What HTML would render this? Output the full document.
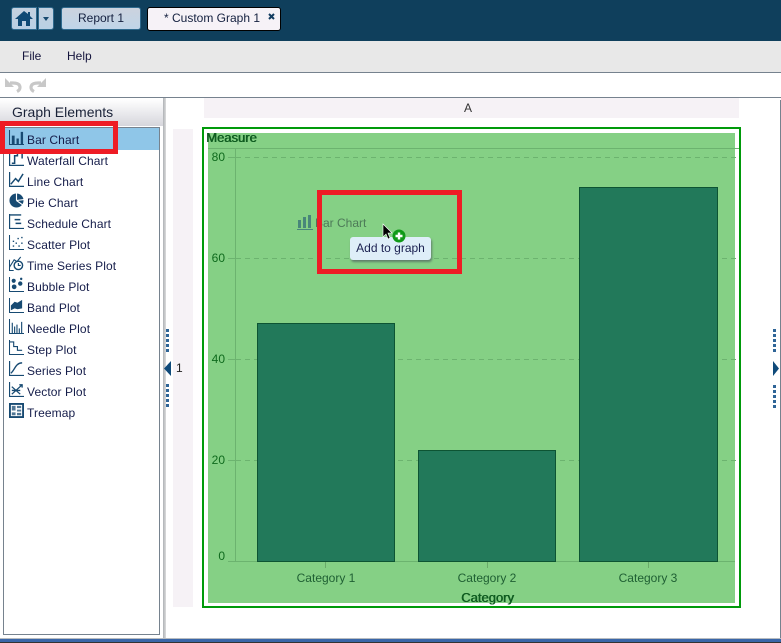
<!DOCTYPE html>
<html><head><meta charset="utf-8"><style>
html,body{margin:0;padding:0;background:#fff}
#p{position:relative;width:781px;height:643px;overflow:hidden;background:#fff;font:12px "Liberation Sans",sans-serif;color:#10204a}
#p div,#p svg,#p span{position:absolute;white-space:nowrap}
.r{left:27px;height:21px;line-height:21px;font-size:12px;color:#151d4a;letter-spacing:.1px}
.i{left:9px;width:15px;height:15px;fill:none;stroke:#174a72;stroke-width:1.2}
.y{color:#0f6a1d;font-size:12px;text-align:right;width:20px;left:205px;height:14px;line-height:14px}
.c{color:#1f5f33;font-size:12px;width:100px;text-align:center;top:571px;line-height:14px}
.g{left:236px;width:500px;height:1px;background:repeating-linear-gradient(90deg,#6cb36f 0 5px,transparent 5px 9px)}
.k{left:228px;width:8px;height:1px;background:#6cb36f}
.b{background:#22795a;border:1px solid #0d5433;box-sizing:border-box}
.t{width:1px;height:6px;background:#69aa69;top:562px}
.d{width:3px;height:3px;background:#2f6597}
</style></head><body><div id="p">
<div style="left:0;top:0;width:781px;height:41px;background:#0f3f5c"></div>
<div style="left:11px;top:7px;width:26px;height:23px;background:linear-gradient(#c4d1df,#b9d0e4);border:1px solid #2f6a8e;border-radius:3px 0 0 3px;box-sizing:border-box"></div>
<svg style="left:14px;top:9px" width="20" height="19" viewBox="0 0 20 19"><path d="M10 2L1 10h3v7h4v-5h4v5h4v-7h3l-3-3V3h-2v2z" fill="#0f4a75"/></svg>
<div style="left:38px;top:7px;width:16px;height:23px;background:linear-gradient(#c4d1df,#b9d0e4);border:1px solid #2f6a8e;border-radius:0 3px 3px 0;box-sizing:border-box"></div>
<svg style="left:43px;top:17px" width="6" height="4"><path d="M0 0h6L3 4z" fill="#184a70"/></svg>
<div style="left:61px;top:7px;width:80px;height:23px;background:linear-gradient(#ccd3de,#bfd4e8);border:1px solid #2f6a8e;border-radius:3px;box-sizing:border-box;text-align:center;line-height:21px;color:#14203f">Report 1</div>
<div style="left:147px;top:7px;width:134px;height:24px;background:#f6f2f7;border:1px solid #000;border-radius:3px;box-sizing:border-box"></div>
<div style="left:164px;top:10px;line-height:16px;color:#14203f">* Custom Graph 1</div>
<svg style="left:268px;top:13px" width="7" height="7"><path d="M1 1l5 5M6 1L1 6" stroke="#123c60" stroke-width="2"/></svg>

<div style="left:0;top:41px;width:781px;height:31px;background:#e8e8e8"></div>
<div style="left:22px;top:49px;line-height:15px;color:#14143c">File</div>
<div style="left:67px;top:49px;line-height:15px;color:#14143c">Help</div>
<div style="left:0;top:72px;width:781px;height:1px;background:#76828e"></div>
<div style="left:0;top:97px;width:781px;height:1px;background:#76828e"></div>
<svg style="left:4px;top:77px" width="44" height="16" viewBox="0 0 44 16"><g fill="none" stroke="#c8c8c8" stroke-width="3.200"><path d="M13 14.500c3-1.500 3.500-4 2.500-6C14.500 6.500 12 6 9 6H6"/><path d="M30 14.500c-3-1.500-3.500-4-2.500-6C28.500 6.500 31 6 34 6h3"/></g><path d="M1 1v9h9zM42 1v9h-9z" fill="#c8c8c8"/></svg>

<div style="left:0;top:98px;width:163px;height:540px;background:#fff"></div>
<div style="left:163px;top:98px;width:3px;height:541px;background:linear-gradient(90deg,#aeb2b6,#dcdcdc)"></div>
<div style="left:0;top:99px;width:163px;height:27px;background:linear-gradient(#fff,#d6d6dc)"></div>
<div style="left:12px;top:104px;font-size:14px;line-height:17px;color:#1a2238">Graph Elements</div>
<div style="left:3px;top:127px;width:157px;height:508px;border:1px solid #76828e;box-sizing:border-box;background:#fff"></div>
<div style="left:4px;top:128px;width:155px;height:22px;background:#8fc6e8"></div>

<div class="r" style="top:130px">Bar Chart</div>
<div class="r" style="top:151px">Waterfall Chart</div>
<div class="r" style="top:172px">Line Chart</div>
<div class="r" style="top:193px">Pie Chart</div>
<div class="r" style="top:214px">Schedule Chart</div>
<div class="r" style="top:235px">Scatter Plot</div>
<div class="r" style="top:256px">Time Series Plot</div>
<div class="r" style="top:277px">Bubble Plot</div>
<div class="r" style="top:298px">Band Plot</div>
<div class="r" style="top:319px">Needle Plot</div>
<div class="r" style="top:340px">Step Plot</div>
<div class="r" style="top:361px">Series Plot</div>
<div class="r" style="top:382px">Vector Plot</div>
<div class="r" style="top:403px">Treemap</div>

<svg class="i" style="top:130px" viewBox="0 0 16 16"><path d="M.5 0v15.500H16"/><path d="M3 6h3v9H3zM8 9h2.500v6H8zM12.500 2H15v13h-2.500z" fill="#174a72" stroke="none"/></svg>
<svg class="i" style="top:151px" viewBox="0 0 16 16"><path d="M.5 0v15.500H16M3 13h3V5h3V2h5v6" stroke-width="1.600"/></svg>
<svg class="i" style="top:172px" viewBox="0 0 16 16"><path d="M.5 0v15.500H16M2 13l5-6 3 3 5-8" stroke-width="1.600"/></svg>
<svg class="i" style="top:193px" viewBox="0 0 16 16"><circle cx="8" cy="8" r="7.500" fill="#174a72" stroke="none"/><path d="M8 8V0M8 8l8-1M8 8l7 5" stroke="#fff" stroke-width="1.200"/></svg>
<svg class="i" style="top:214px" viewBox="0 0 16 16"><path d="M.5 0v15.500H16M.5 1H13M6 6h6M7 10h6" stroke-width="1.500"/></svg>
<svg class="i" style="top:235px" viewBox="0 0 16 16"><path d="M.5 0v15.500H16"/><path d="M4 11h1.500v1.500H4zM7 8h1.500v1.500H7zM10 11h1.500v1.500H10zM13 8h1.500v1.500H13zM9 3h1.500v1.500H9zM13 2h1.500v1.500H13zM4 6h1.500v1.500H4z" fill="#174a72" stroke="none"/></svg>
<svg class="i" style="top:256px" viewBox="0 0 16 16"><path d="M.5 12l5-8 3 2 4-5"/><circle cx="10" cy="10" r="4.500" stroke-width="1.500"/><path d="M10 7.500V10h2.500"/><path d="M.5 4v11.500H5"/></svg>
<svg class="i" style="top:277px" viewBox="0 0 16 16"><path d="M.5 0v15.500H16"/><circle cx="5" cy="4" r="2.200" fill="#174a72" stroke="none"/><circle cx="12" cy="7" r="2.300" fill="#174a72" stroke="none"/><circle cx="5.500" cy="10.500" r="2.500" fill="#174a72" stroke="none"/><circle cx="13" cy="2" r="1.300" fill="#174a72" stroke="none"/></svg>
<svg class="i" style="top:298px" viewBox="0 0 16 16"><path d="M.5 0v15.500H16"/><path d="M2 8l4-4 3 1 5-3v9l-5 1-3-1-4 2z" fill="#174a72" stroke="none"/></svg>
<svg class="i" style="top:319px" viewBox="0 0 16 16"><path d="M.5 0v15.500H16M3.500 15V4M6 15V8M8.500 15V6M11 15V10M13.500 15V3"/></svg>
<svg class="i" style="top:340px" viewBox="0 0 16 16"><path d="M.5 0v15.500H16M1 2h4v5h4v4h5"/></svg>
<svg class="i" style="top:361px" viewBox="0 0 16 16"><path d="M.5 0v15.500H16M2 13c4-3 5-11 12-11" stroke-width="1.500"/></svg>
<svg class="i" style="top:382px" viewBox="0 0 16 16"><path d="M.5 0v15.500H16M3 13L14 3M11 3h3v3M3 5l9 8M3 9h9" stroke-width="1.400"/></svg>
<svg class="i" style="top:403px" viewBox="0 0 16 16"><path d="M1 1h14v14H1z" stroke-width="2"/><path d="M3 3h4v5H3zM8.500 3H13v2.500H8.500zM8.500 7H13v2H8.500zM3 10h4v3H3zM8.500 10.500H13V13H8.500z" fill="#174a72" stroke="none" opacity=".75"/></svg>

<div style="left:0;top:121px;width:118px;height:33px;border:5px solid #ee1c25;box-sizing:border-box"></div>

<div style="left:204px;top:98px;width:535px;height:20px;background:#f6f2f6"></div>
<div style="left:464px;top:101px;line-height:14px;color:#333">A</div>
<div style="left:173px;top:129px;width:20px;height:478px;background:#f6f2f6"></div>
<div style="left:176px;top:361px;line-height:14px;color:#222">1</div>

<div class="d" style="left:166px;top:329px"></div><div class="d" style="left:166px;top:334px"></div><div class="d" style="left:166px;top:339px"></div><div class="d" style="left:166px;top:344px"></div><div class="d" style="left:166px;top:349px"></div>
<svg style="left:164px;top:361px" width="8" height="15"><path d="M7 0v15L0 7.500z" fill="#0f4a7a"/></svg>
<div class="d" style="left:166px;top:384px"></div><div class="d" style="left:166px;top:389px"></div><div class="d" style="left:166px;top:394px"></div><div class="d" style="left:166px;top:399px"></div><div class="d" style="left:166px;top:404px"></div>

<div class="d" style="left:773px;top:329px"></div><div class="d" style="left:773px;top:334px"></div><div class="d" style="left:773px;top:339px"></div><div class="d" style="left:773px;top:344px"></div><div class="d" style="left:773px;top:349px"></div>
<svg style="left:773px;top:361px" width="7" height="15"><path d="M0 0v15l6-7.500z" fill="#0f4a7a"/></svg>
<div class="d" style="left:773px;top:385px"></div><div class="d" style="left:773px;top:390px"></div><div class="d" style="left:773px;top:395px"></div><div class="d" style="left:773px;top:400px"></div><div class="d" style="left:773px;top:405px"></div>
<div style="left:780px;top:100px;width:1px;height:540px;background:#76828e"></div>

<div style="left:202px;top:127px;width:539px;height:481px;border:2px solid #009a0a;box-sizing:border-box"></div>
<div style="left:208px;top:133px;width:527px;height:470px;background:#85d085"></div>
<div style="left:208px;top:148px;width:531px;height:1px;background:#6cb36f"></div>
<div style="left:235px;top:148px;width:1px;height:414px;background:#6cb36f"></div>
<div style="left:228px;top:561px;width:507px;height:1px;background:#6cb36f"></div>
<div class="k" style="top:157px"></div><div class="k" style="top:258px"></div><div class="k" style="top:359px"></div><div class="k" style="top:460px"></div>
<div class="g" style="top:157px"></div><div class="g" style="top:258px"></div><div class="g" style="top:359px"></div><div class="g" style="top:460px"></div>
<div class="b" style="left:257px;top:323px;width:138px;height:239px"></div>
<div class="b" style="left:418px;top:450px;width:138px;height:112px"></div>
<div class="b" style="left:579px;top:187px;width:139px;height:375px"></div>
<div class="t" style="left:325px"></div><div class="t" style="left:487px"></div><div class="t" style="left:648px"></div>
<div class="y" style="top:150px">80</div><div class="y" style="top:251px">60</div><div class="y" style="top:352px">40</div><div class="y" style="top:453px">20</div><div class="y" style="top:549px">0</div>
<div class="c" style="left:276px">Category 1</div><div class="c" style="left:437px">Category 2</div><div class="c" style="left:598px">Category 3</div>
<div style="left:206px;top:130px;font-size:13px;line-height:15px;color:#0f5c20;text-shadow:.6px 0 0 #0f5c20">Measure</div>
<div style="left:461px;top:590px;font-size:13px;line-height:15px;color:#0f5c20;text-shadow:.6px 0 0 #0f5c20">Category</div>

<svg style="left:297px;top:214px;opacity:.55" width="16" height="16" viewBox="0 0 16 16"><path d="M0 15h16v1H0zM1 6h3v8H1zM6 3h3v11H6zM11 1h3v13h-3z" fill="#174a72"/></svg>
<div style="left:315px;top:216px;line-height:15px;color:#4d7a58">Bar Chart</div>

<div style="left:317px;top:190px;width:145px;height:84px;border:5px solid #ee1c25;box-sizing:border-box"></div>
<div style="left:350px;top:237px;width:81px;height:23px;background:#deeef8;border-radius:3px;box-shadow:1px 2px 2px #5f7f6a;text-align:center;line-height:23px;color:#1a2050">Add to graph</div>
<svg style="left:382px;top:223px" width="11" height="17" viewBox="0 0 11 17"><path d="M1 1v13l3-3 2 5 2-1-2-5h4z" fill="#000" stroke="#fff" stroke-width=".6"/></svg>
<svg style="left:392px;top:229px" width="14" height="14" viewBox="0 0 14 14"><circle cx="7" cy="7" r="6.500" fill="#109a18"/><path d="M3.500 7h7M7 3.500v7" stroke="#fff" stroke-width="2.400"/></svg>

<div style="left:0;top:638px;width:781px;height:1px;background:#b8bcc0"></div>
<div style="left:0;top:639px;width:781px;height:3px;background:#3a66a8"></div>
<div style="left:0;top:642px;width:781px;height:1px;background:#333"></div>
</div></body></html>
